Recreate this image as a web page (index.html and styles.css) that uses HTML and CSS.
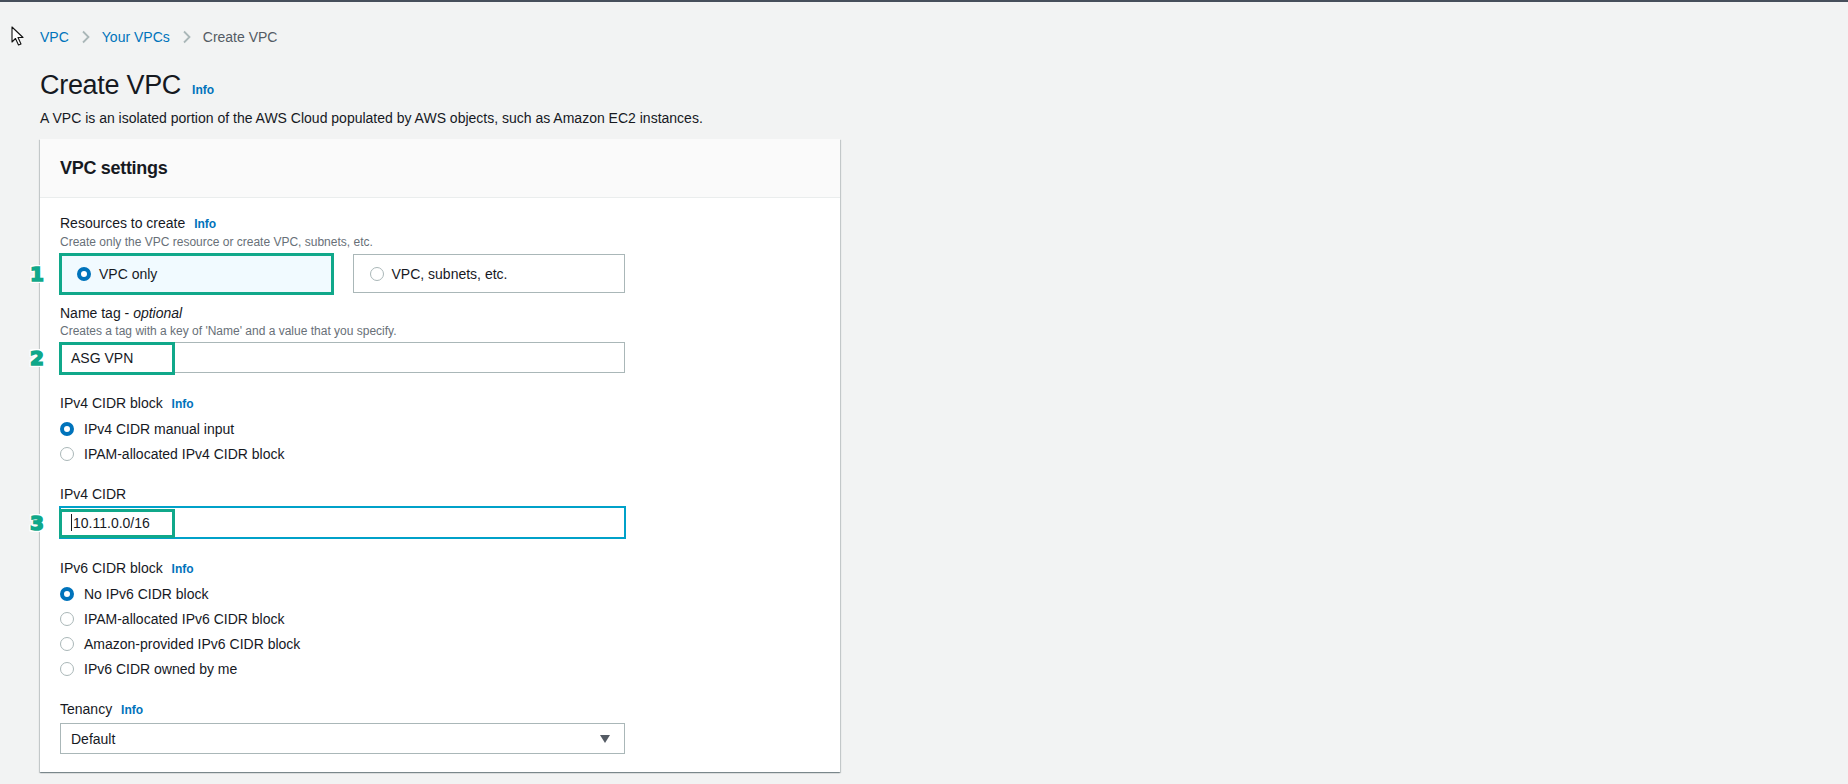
FILE: index.html
```html
<!DOCTYPE html>
<html lang="en">
<head>
  <meta charset="UTF-8">
  <title>Create VPC</title>
  <link rel="stylesheet" href="styles.css">
</head>
<body>
  <svg class="pointer" width="14" height="21" viewBox="0 0 14 21">
    <path d="M1 1 L1 16 L4.5 12.5 L7.5 19 L10 18 L7 11.5 L12 11.5 Z" fill="#fff" stroke="#111" stroke-width="1.1" stroke-linejoin="round"/>
  </svg>

  <div class="page">
    <nav class="crumbs">
      <a href="#">VPC</a>
      <svg class="chev" width="10" height="14" viewBox="0 0 10 14"><path d="M2 1.5 L7.5 7 L2 12.5" fill="none" stroke="#aab7b8" stroke-width="1.8"/></svg>
      <a href="#">Your VPCs</a>
      <svg class="chev" width="10" height="14" viewBox="0 0 10 14"><path d="M2 1.5 L7.5 7 L2 12.5" fill="none" stroke="#aab7b8" stroke-width="1.8"/></svg>
      <span class="current">Create VPC</span>
    </nav>

    <div class="page-head">
      <h1>Create VPC</h1>
      <a href="#" class="info">Info</a>
    </div>
    <p class="page-desc">A VPC is an isolated portion of the AWS Cloud populated by AWS objects, such as Amazon EC2 instances.</p>

    <section class="card">
      <header class="card-head">
        <h2>VPC settings</h2>
      </header>
      <div class="card-body">

        <div class="field">
          <div class="label">Resources to create <a href="#" class="info">Info</a></div>
          <div class="hint">Create only the VPC resource or create VPC, subnets, etc.</div>
          <div class="tiles">
            <div class="tile selected">
              <span class="radio on"></span>VPC only
              <span class="mark mark-tile"></span>
              <span class="badge">1</span>
            </div>
            <div class="tile">
              <span class="radio"></span>VPC, subnets, etc.
            </div>
          </div>
        </div>

        <div class="field">
          <div class="label">Name tag - <i>optional</i></div>
          <div class="hint">Creates a tag with a key of 'Name' and a value that you specify.</div>
          <div class="input">
            ASG VPN
            <span class="mark mark-name"></span>
            <span class="badge">2</span>
          </div>
        </div>

        <div class="field">
          <div class="label">IPv4 CIDR block <a href="#" class="info">Info</a></div>
          <div class="radios">
            <div class="radio-row"><span class="radio on"></span>IPv4 CIDR manual input</div>
            <div class="radio-row"><span class="radio"></span>IPAM-allocated IPv4 CIDR block</div>
          </div>
        </div>

        <div class="field">
          <div class="label">IPv4 CIDR</div>
          <div class="input focused">
            <span class="caret"></span>10.11.0.0/16
            <span class="mark mark-cidr"></span>
            <span class="badge">3</span>
          </div>
        </div>

        <div class="field">
          <div class="label">IPv6 CIDR block <a href="#" class="info">Info</a></div>
          <div class="radios">
            <div class="radio-row"><span class="radio on"></span>No IPv6 CIDR block</div>
            <div class="radio-row"><span class="radio"></span>IPAM-allocated IPv6 CIDR block</div>
            <div class="radio-row"><span class="radio"></span>Amazon-provided IPv6 CIDR block</div>
            <div class="radio-row"><span class="radio"></span>IPv6 CIDR owned by me</div>
          </div>
        </div>

        <div class="field">
          <div class="label">Tenancy <a href="#" class="info">Info</a></div>
          <div class="input select">
            Default
            <svg width="10" height="8" viewBox="0 0 10 8"><path d="M0 0 L10 0 L5 8 Z" fill="#545b64"/></svg>
          </div>
        </div>

      </div>
    </section>
  </div>
</body>
</html>
```

FILE: styles.css
```css
body {
  margin: 0;
  padding: 0;
  background-color: #f2f3f3;
  border-top: 2px solid #464f5b;
  font-family: 'Liberation Sans', Arial, sans-serif;
  font-size: 14px;
  line-height: 20px;
  color: #16191f;
  height: 782px;
  overflow: hidden;
}

a {
  color: #0073bb;
  text-decoration: none;
}

.pointer {
  position: absolute;
  left: 11px;
  top: 26px;
}

.page {
  padding: 25px 0 0 40px;
}

/* パンくず */
.crumbs {
  display: flex;
  align-items: center;
  height: 20px;
}

.crumbs .chev {
  margin: 0 11px 0 12px;
}

.crumbs .current {
  color: #545b64;
}

.page-head {
  display: flex;
  align-items: baseline;
  margin-top: 20px;
  height: 36px;
}

.page-head h1 {
  margin: 0;
  font-size: 27px;
  line-height: 36px;
  letter-spacing: -0.3px;
  font-weight: normal;
}

.info {
  font-size: 12px;
  font-weight: bold;
  margin-left: 5px;
}

.page-head .info {
  margin-left: 11px;
}

.page-desc {
  margin: 5px 0 0;
  line-height: 20px;
}

/* カード */
.card {
  width: 800px;
  margin-top: 11px;
  background-color: #fff;
  box-shadow: 0 1px 1px 0 rgba(0, 28, 36, 0.3), 1px 1px 1px 0 rgba(0, 28, 36, 0.15), -1px 1px 1px 0 rgba(0, 28, 36, 0.15);
}

.card-head {
  background-color: #fafafa;
  border-bottom: 1px solid #eaeded;
  padding: 18px 20px;
}

.card-head h2 {
  margin: 0;
  font-size: 18px;
  line-height: 22px;
  letter-spacing: -0.3px;
  font-weight: bold;
}

.card-body {
  padding: 15px 20px 18px;
  width: 565px;
}

.field + .field {
  margin-top: 20px;
}

.field:nth-child(2) {
  margin-top: 10px;
}

.label {
  line-height: 20px;
}

.hint {
  font-size: 12px;
  line-height: 16px;
  color: #687078;
}

.tiles {
  display: flex;
  gap: 20px;
  margin-top: 4px;
}

.tile {
  position: relative;
  flex: 1;
  height: 39px;
  box-sizing: border-box;
  border: 1px solid #aab7b8;
  display: flex;
  align-items: center;
  padding-left: 16px;
}

.tile.selected {
  background-color: #f1faff;
  border-color: #0073bb;
}

.radio {
  width: 14px;
  height: 14px;
  box-sizing: border-box;
  border-radius: 50%;
  border: 1px solid #aab7b8;
  background-color: #fff;
  margin-right: 10px;
  flex-shrink: 0;
}

.tile .radio {
  margin-right: 8px;
}

.radio.on {
  border: 4px solid #0073bb;
}

.radios {
  margin-top: 5px;
  display: flex;
  flex-direction: column;
  gap: 5px;
}

.radio-row {
  display: flex;
  align-items: center;
  height: 20px;
}

.input {
  position: relative;
  margin-top: 3px;
  height: 31px;
  box-sizing: border-box;
  border: 1px solid #aab7b8;
  background-color: #fff;
  display: flex;
  align-items: center;
  padding-left: 10px;
}

.input.focused {
  border-color: #00a1c9;
  box-shadow: 0 0 0 1px #00a1c9;
}

.caret {
  width: 1px;
  height: 17px;
  background-color: #16191f;
  margin-right: 1px;
}

.select {
  justify-content: space-between;
  padding-right: 14px;
}

/* 注釈 */
.mark {
  position: absolute;
  border: 3px solid #10a88a;
  box-sizing: border-box;
}

.mark-tile {
  left: -2px;
  top: -2px;
  width: 275px;
  height: 42px;
}

.mark-name {
  left: -2px;
  top: -1px;
  width: 116px;
  height: 33px;
}

.mark-cidr {
  left: -2px;
  top: 1px;
  width: 116px;
  height: 29px;
}

.badge {
  position: absolute;
  left: -33px;
  top: 50%;
  transform: translateY(-50%);
  width: 18px;
  text-align: center;
  font-family: 'DejaVu Sans', sans-serif;
  font-weight: bold;
  font-size: 20px;
  line-height: 22px;
  color: #10a88a;
  -webkit-text-stroke: 1.6px #10a88a;
  text-shadow: 2px 0 0 #fff, -2px 0 0 #fff, 0 2px 0 #fff, 0 -2px 0 #fff, 2px 2px 0 #fff, -2px -2px 0 #fff, 2px -2px 0 #fff, -2px 2px 0 #fff;
}
```
